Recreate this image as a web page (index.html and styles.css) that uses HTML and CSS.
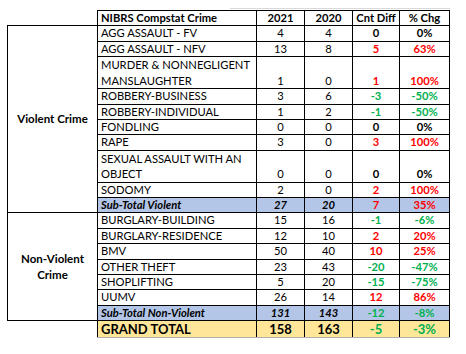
FILE: index.html
```html
<!DOCTYPE html>
<html>
<head>
<meta charset="utf-8">
<link rel="stylesheet" href="styles.css">
</head>
<body>
<div class="sheet">
<div class="topline"></div>
<table class="stats">
  <colgroup>
    <col class="c-cat"><col class="c-crime"><col class="c-num"><col class="c-num"><col class="c-diff"><col class="c-pct">
  </colgroup>
  <tr class="head">
    <td class="blank"></td>
    <td class="crime">NIBRS Compstat Crime</td>
    <td>2021</td><td>2020</td><td>Cnt Diff</td><td>% Chg</td>
  </tr>
  <tr>
    <td class="cat" rowspan="10">Violent Crime</td>
    <td class="crime">AGG ASSAULT - FV</td><td>4</td><td>4</td><td class="b">0</td><td class="b">0%</td>
  </tr>
  <tr><td class="crime">AGG ASSAULT - NFV</td><td>13</td><td>8</td><td class="b up">5</td><td class="b up">63%</td></tr>
  <tr class="dbl"><td class="crime">MURDER &amp; NONNEGLIGENT<br>MANSLAUGHTER</td><td>1</td><td>0</td><td class="b up">1</td><td class="b up">100%</td></tr>
  <tr><td class="crime">ROBBERY-BUSINESS</td><td>3</td><td>6</td><td class="b down">-3</td><td class="b down">-50%</td></tr>
  <tr><td class="crime">ROBBERY-INDIVIDUAL</td><td>1</td><td>2</td><td class="b down">-1</td><td class="b down">-50%</td></tr>
  <tr><td class="crime">FONDLING</td><td>0</td><td>0</td><td class="b">0</td><td class="b">0%</td></tr>
  <tr><td class="crime">RAPE</td><td>3</td><td>0</td><td class="b up">3</td><td class="b up">100%</td></tr>
  <tr class="dbl"><td class="crime">SEXUAL ASSAULT WITH AN<br>OBJECT</td><td>0</td><td>0</td><td class="b">0</td><td class="b">0%</td></tr>
  <tr><td class="crime">SODOMY</td><td>2</td><td>0</td><td class="b up">2</td><td class="b up">100%</td></tr>
  <tr class="sub"><td class="crime bi">Sub-Total Violent</td><td class="bi">27</td><td class="bi">20</td><td class="b up">7</td><td class="b up">35%</td></tr>
  <tr>
    <td class="cat" rowspan="7">Non-Violent<br>Crime</td>
    <td class="crime">BURGLARY-BUILDING</td><td>15</td><td>16</td><td class="b down">-1</td><td class="b down">-6%</td>
  </tr>
  <tr><td class="crime">BURGLARY-RESIDENCE</td><td>12</td><td>10</td><td class="b up">2</td><td class="b up">20%</td></tr>
  <tr><td class="crime">BMV</td><td>50</td><td>40</td><td class="b up">10</td><td class="b up">25%</td></tr>
  <tr><td class="crime">OTHER THEFT</td><td>23</td><td>43</td><td class="b down">-20</td><td class="b down">-47%</td></tr>
  <tr><td class="crime">SHOPLIFTING</td><td>5</td><td>20</td><td class="b down">-15</td><td class="b down">-75%</td></tr>
  <tr><td class="crime">UUMV</td><td>26</td><td>14</td><td class="b up">12</td><td class="b up">86%</td></tr>
  <tr class="sub"><td class="crime bi">Sub-Total Non-Violent</td><td class="bi">131</td><td class="bi">143</td><td class="b down">-12</td><td class="b down">-8%</td></tr>
  <tr class="grand">
    <td class="blank"></td>
    <td class="crime">GRAND TOTAL</td><td>158</td><td>163</td><td class="down">-5</td><td class="down">-3%</td>
  </tr>
</table>
</div>
</body>
</html>
```
FILE: styles.css
```css
html, body {
  margin: 0;
  padding: 0;
  background: #fff;
}
.sheet {
  padding: 8px 0 0 7px;
}
.topline {
  margin-left: 223px;
  width: 220px;
  height: 1px;
  background: #d9d9d9;
  margin-bottom: 1px;
}
.stats {
  border-collapse: collapse;
  table-layout: fixed;
  width: 443px;
  font-family: Lato, "Liberation Sans", sans-serif;
  font-size: 11.2px;
  color: #000;
}
.c-cat { width: 90px; }
.c-crime { width: 159px; }
.c-num { width: 48px; }
.c-diff { width: 47px; }
.c-pct { width: 50px; }
.stats td {
  border: 1px solid #000;
  height: 14.35px;
  padding: 0 2px;
  line-height: 14.35px;
  text-align: center;
  vertical-align: bottom;
  white-space: nowrap;
}
.stats tr.dbl td {
  height: 30.4px;
}
.stats tr.dbl td.crime {
  line-height: 15.6px;
}
.stats td.crime {
  text-align: left;
  padding-left: 3px;
}
.stats td.blank {
  border: none;
}
.stats td.cat {
  font-weight: 700;
  font-size: 11.5px;
  vertical-align: middle;
  padding: 0 2px;
  line-height: 16px;
}
.head td {
  font-weight: 700;
}
.b { font-weight: 700; }
.bi { font-weight: 700; font-style: italic; }
.up { color: #ff0000; }
.down { color: #00b050; }
.sub td:not(.cat) {
  background: #b4c6e7;
}
.grand td:not(.blank) {
  background: #ffe699;
  font-size: 13px;
  font-weight: 700;
  height: 16px;
  line-height: 16px;
  border-bottom-color: #b0b0b0;
}
```
